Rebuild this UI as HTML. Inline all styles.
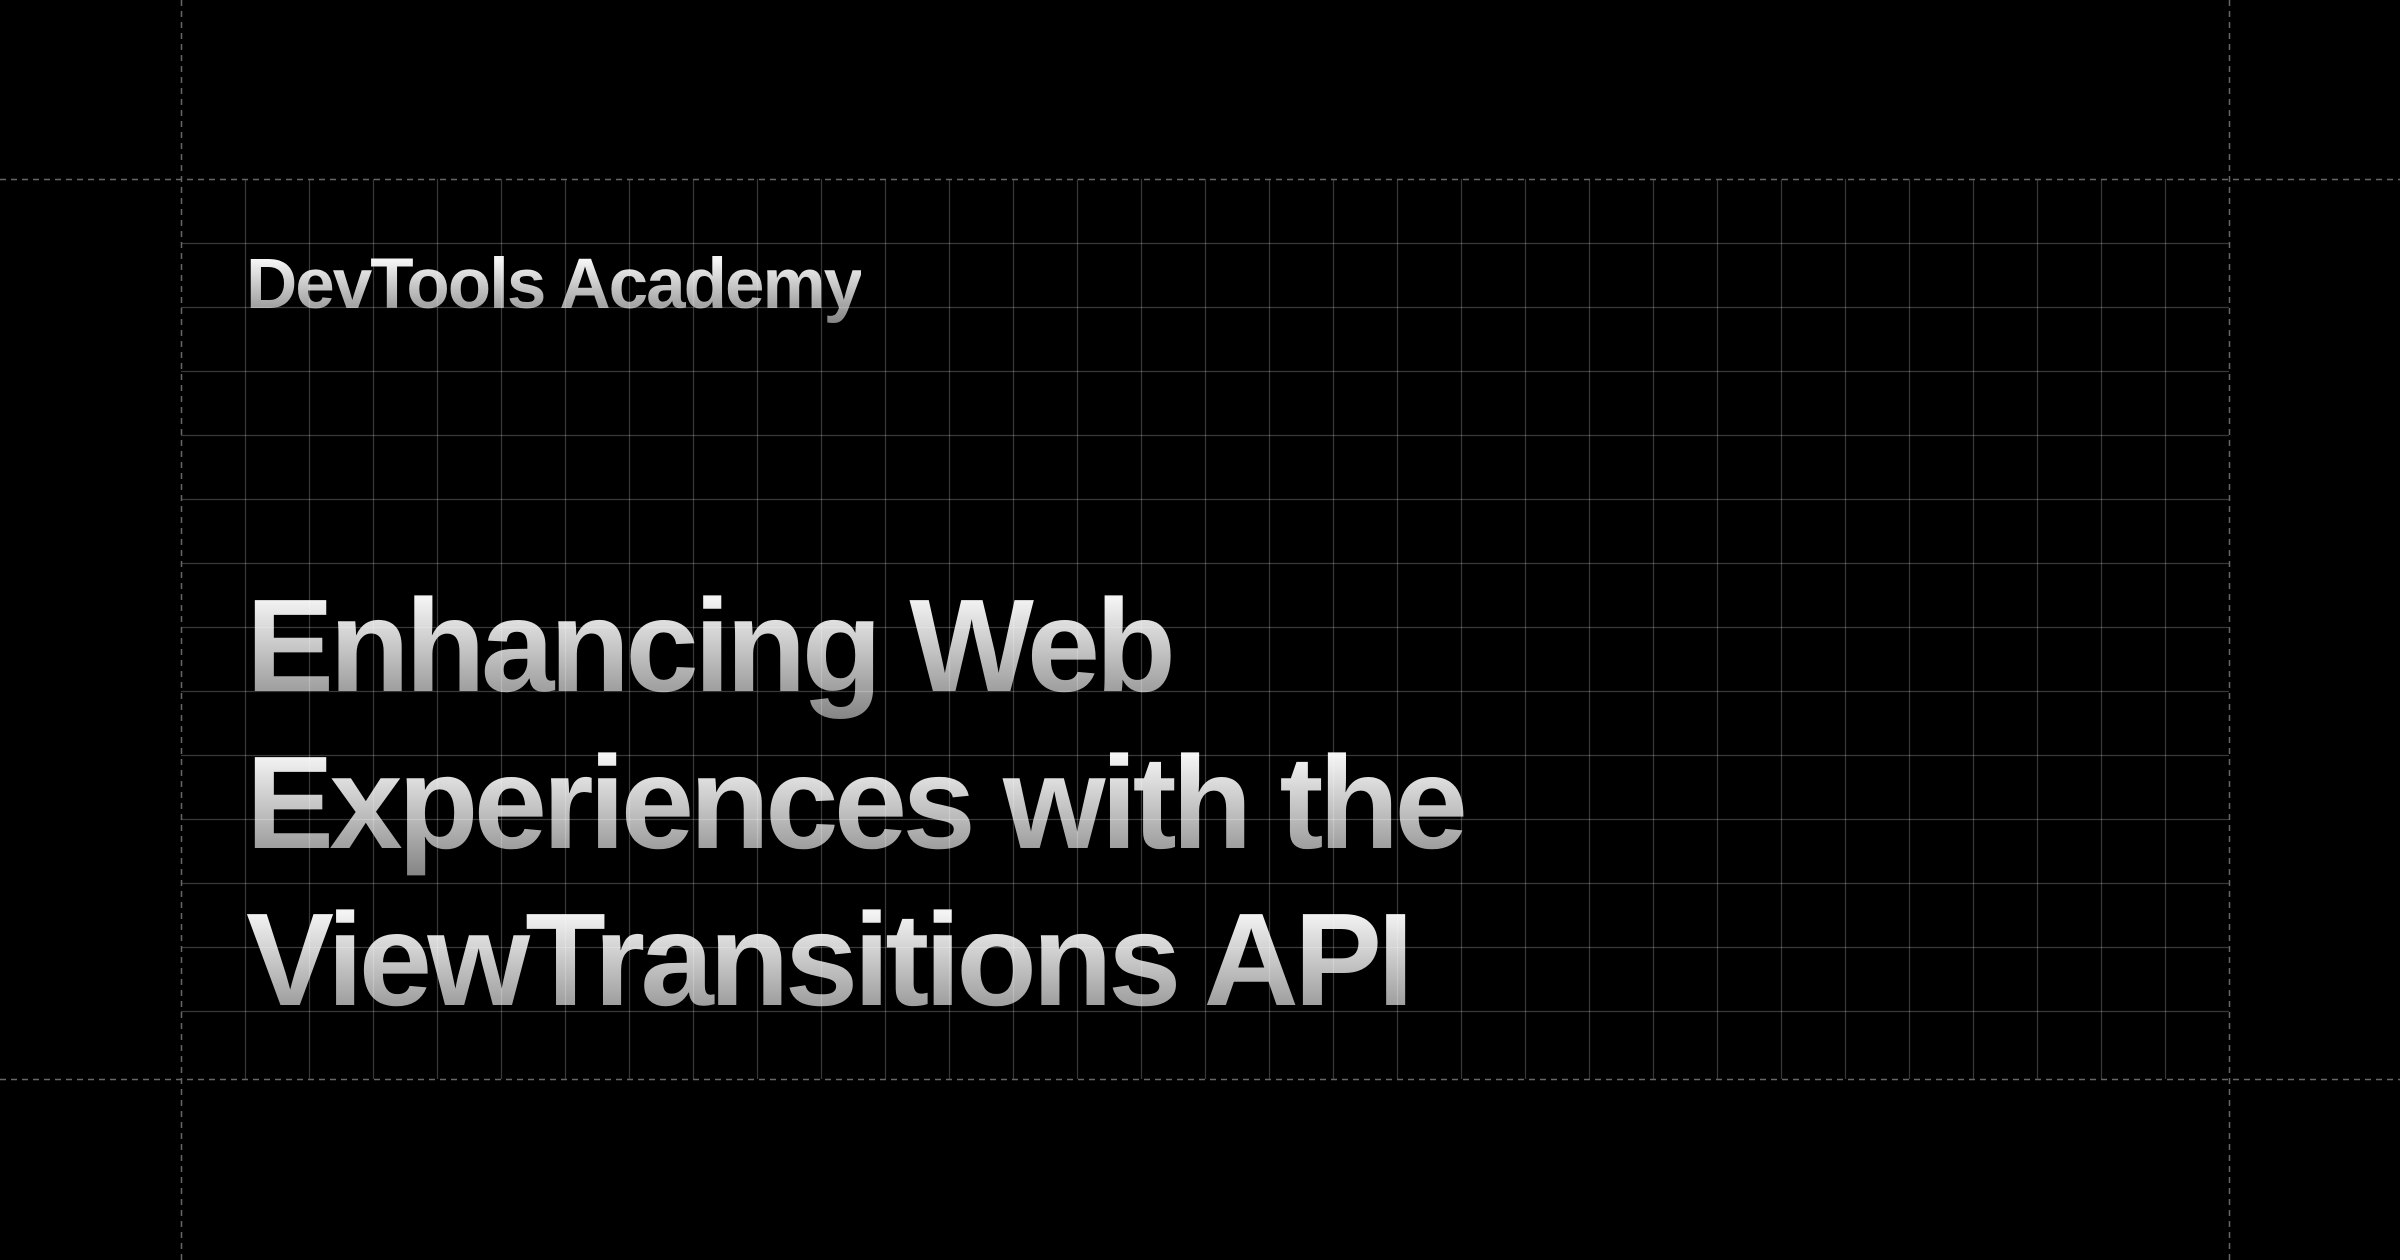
<!DOCTYPE html>
<html><head><meta charset="utf-8"><style>
html,body{margin:0;padding:0;background:#000;width:2400px;height:1260px;overflow:hidden;position:relative}
.t{position:absolute;left:0;font-family:"Liberation Sans",Arial,sans-serif;font-weight:bold;white-space:nowrap;
background:linear-gradient(180deg,#f4f4f4 20%,#808080 100%);-webkit-background-clip:text;background-clip:text;color:transparent}
.brand{left:246px;top:245px;font-size:71px;line-height:80px;letter-spacing:-2px}
.h{left:246px;font-size:132px;line-height:157px;letter-spacing:-4.8px;padding-right:10px}
svg{position:absolute;left:0;top:0}
</style></head><body>
<div class="t brand">DevTools Academy</div>
<div class="t h" style="top:567px">Enhancing Web</div>
<div class="t h" style="top:724px">Experiences with the</div>
<div class="t h" style="top:881px">ViewTransitions API</div>
<svg width="2400" height="1260" xmlns="http://www.w3.org/2000/svg">
<g stroke="rgba(255,255,255,0.22)" stroke-width="1.2" id="grid"></g>
<g stroke="#666" stroke-width="1.5" stroke-dasharray="6 5">
<line x1="0" y1="179.5" x2="2400" y2="179.5"/>
<line x1="0" y1="1079.5" x2="2400" y2="1079.5"/>
<line x1="181.5" y1="0" x2="181.5" y2="1260"/>
<line x1="2229.5" y1="0" x2="2229.5" y2="1260"/>
</g>
</svg>
<script>
var g=document.getElementById('grid'),s='';
for(var k=1;k<32;k++){var x=181.5+64*k;s+='<line x1="'+x+'" y1="179" x2="'+x+'" y2="1079"/>';}
for(var k=1;k<14;k++){var y=179.5+64*k;s+='<line x1="181" y1="'+y+'" x2="2229" y2="'+y+'"/>';}
g.innerHTML=s;
</script>
</body></html>
